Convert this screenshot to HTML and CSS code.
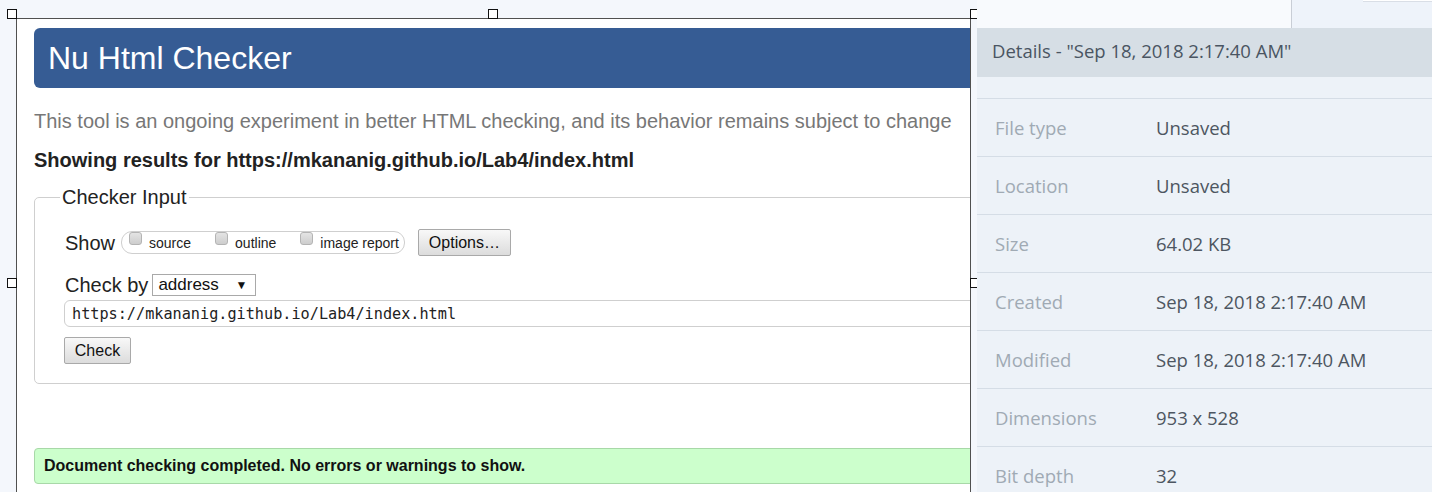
FILE: index.html
```html
<!DOCTYPE html>
<html lang="en">
<head>
<meta charset="utf-8">
<title>Nu Html Checker - Details</title>
<link rel="stylesheet" href="styles.css">
</head>
<body>
<div class="canvas">
  <div class="image">
    <div class="page">
      <h1 class="nu-header">Nu Html Checker</h1>
      <p class="intro">This tool is an ongoing experiment in better HTML checking, and its behavior remains subject to change</p>
      <p class="showing">Showing results for https://mkananig.github.io/Lab4/index.html</p>
      <fieldset class="checker">
        <legend>Checker Input</legend>
        <div class="row show-row">
          <span class="lbl">Show</span>
          <span class="pill">
            <span class="opt"><span class="cb"></span><span class="opt-text">source</span></span>
            <span class="opt"><span class="cb"></span><span class="opt-text">outline</span></span>
            <span class="opt"><span class="cb"></span><span class="opt-text">image report</span></span>
          </span>
          <span class="btn btn-options">Options…</span>
        </div>
        <div class="row by-row">
          <span class="lbl">Check by</span>
          <span class="select"><span class="sel-text">address</span><span class="sel-arrow">▼</span></span>
        </div>
        <div class="url-input">https://mkananig.github.io/Lab4/index.html</div>
        <span class="btn btn-check">Check</span>
      </fieldset>
      <div class="success">Document checking completed. No errors or warnings to show.</div>
    </div>
  </div>
  <span class="handle h-tl"></span>
  <span class="handle h-tm"></span>
  <span class="handle h-tr"></span>
  <span class="handle h-ml"></span>
  <span class="handle h-mr"></span>
</div>
<aside class="panel">
  <div class="panel-top">
    <div class="top-left"></div>
    <div class="top-right"><span class="top-tab"></span></div>
  </div>
  <div class="panel-body">
    <div class="details-head">Details - "Sep 18, 2018 2:17:40 AM"</div>
    <div class="spacer"></div>
    <div class="drow"><span class="dkey">File type</span><span class="dval">Unsaved</span></div>
    <div class="drow"><span class="dkey">Location</span><span class="dval">Unsaved</span></div>
    <div class="drow"><span class="dkey">Size</span><span class="dval">64.02 KB</span></div>
    <div class="drow"><span class="dkey">Created</span><span class="dval">Sep 18, 2018 2:17:40 AM</span></div>
    <div class="drow"><span class="dkey">Modified</span><span class="dval">Sep 18, 2018 2:17:40 AM</span></div>
    <div class="drow"><span class="dkey">Dimensions</span><span class="dval">953 x 528</span></div>
    <div class="drow"><span class="dkey">Bit depth</span><span class="dval">32</span></div>
  </div>
</aside>
</body>
</html>
```

FILE: styles.css
```css
* { box-sizing: border-box; }
html, body { margin: 0; padding: 0; }
body {
  width: 1432px;
  height: 492px;
  overflow: hidden;
  display: flex;
  background: #f4f7fc;
  font-family: "Liberation Sans", Arial, sans-serif;
}

/* ---------- canvas with the image ---------- */
.canvas {
  position: relative;
  flex: 0 0 977px;
  padding: 18px 0 0 16px;
}
.image {
  width: 955px;
  height: 530px;
  border: 1px solid #505050;
  border-bottom: none;
  background: #fff;
  overflow: hidden;
}
.page {
  width: 1100px;
  padding: 9px 0 0 17px;
}
.nu-header {
  margin: 0;
  height: 60px;
  padding-left: 14px;
  background: #365c94;
  color: #fff;
  font-weight: normal;
  font-size: 32px;
  line-height: 60px;
  border-radius: 6px 0 0 6px;
}
.intro {
  margin: 21px 0 0;
  font-size: 20px;
  line-height: 24px;
  color: #777;
}
.showing {
  margin: 15px 0 0;
  font-size: 20px;
  line-height: 24px;
  font-weight: bold;
  color: #222;
}
.checker {
  margin: 13px 0 0;
  padding: 20px 0 19px 29px;
  border: 1px solid #cfcfcf;
  border-radius: 5px;
  min-width: 0;
}
.checker legend {
  margin-left: -4px;
  padding: 0 2px;
  font-size: 20px;
  line-height: 24px;
  color: #222;
}
.row {
  display: flex;
  align-items: center;
}
.lbl {
  margin-left: 1px;
  font-size: 20px;
  line-height: 24px;
  color: #222;
}
.show-row { height: 27px; }
.pill {
  display: flex;
  align-items: flex-start;
  height: 23px;
  margin-left: 6px;
  padding: 0 5px 0 7px;
  border: 1px solid #cfcfcf;
  border-radius: 11px;
  gap: 24px;
}
.opt {
  display: flex;
  align-items: flex-start;
  gap: 7px;
}
.cb {
  width: 13px;
  height: 13px;
  border: 1px solid #b4b4b4;
  border-radius: 3px;
  background: linear-gradient(#e4e4e4, #cdcdcd);
}
.opt-text {
  font-size: 14px;
  line-height: 22px;
  color: #222;
}
.btn {
  display: inline-flex;
  align-items: center;
  justify-content: center;
  height: 27px;
  border: 1px solid #a9a9a9;
  border-radius: 2px;
  background: linear-gradient(#f8f8f8, #dcdcdc);
  font-size: 16px;
  color: #111;
}
.btn-options {
  width: 93px;
  margin-left: 13px;
}
.by-row {
  margin-top: 17px;
  height: 24px;
}
.select {
  display: flex;
  align-items: center;
  justify-content: space-between;
  width: 104px;
  height: 22px;
  margin-left: 4px;
  padding: 0 8px 0 5px;
  border: 1px solid #a9a9a9;
  background: #fff;
}
.sel-text {
  font-size: 17px;
  line-height: 20px;
  color: #111;
}
.sel-arrow {
  font-size: 12px;
  color: #111;
}
.url-input {
  margin-top: 3px;
  height: 27px;
  width: 1020px;
  padding-left: 7px;
  border: 1px solid #cfcfcf;
  border-radius: 6px 0 0 6px;
  font-family: "DejaVu Sans Mono", "Liberation Mono", monospace;
  font-size: 15.2px;
  line-height: 27px;
  color: #222;
}
.btn-check {
  width: 67px;
  margin-top: 10px;
}
.success {
  margin-top: 64px;
  height: 36px;
  padding-left: 9px;
  background: #ccffcc;
  border: 1px solid #a8d8a8;
  border-radius: 4px 0 0 4px;
  font-size: 16px;
  font-weight: bold;
  line-height: 34px;
  color: #111;
}

/* selection handles over the image frame */
.handle {
  position: absolute;
  width: 10px;
  height: 10px;
  border: 1px solid #111;
  background: #fff;
}
.h-tl { left: 7px; top: 9px; }
.h-tm { left: 488px; top: 9px; }
.h-tr { left: 970px; top: 9px; }
.h-ml { left: 7px; top: 278px; }
.h-mr { left: 970px; top: 278px; }

/* ---------- details panel ---------- */
.panel {
  flex: 1;
  display: flex;
  flex-direction: column;
  font-family: "Open Sans", "Noto Sans", sans-serif;
  position: relative;
  z-index: 1;
}
.panel-top {
  flex: 0 0 28px;
  display: flex;
}
.top-left {
  width: 315px;
  background: #f8fafd;
  border-right: 1px solid #c9ced6;
}
.top-right {
  flex: 1;
  background: #eef3fa;
  display: flex;
  justify-content: flex-end;
}
.top-tab {
  width: 69px;
  height: 2px;
  background: #fff;
  border-bottom: 1px solid #d9dee6;
}
.panel-body {
  flex: 1 0 auto;
  background: #edf2f8;
}
.details-head {
  height: 49px;
  padding-left: 15px;
  background: #d6dee5;
  color: #4a5562;
  font-size: 18.5px;
  line-height: 46px;
}
.spacer { height: 21px; }
.drow {
  display: flex;
  align-items: center;
  height: 58px;
  border-top: 1px solid #d5dde6;
  font-size: 18.5px;
}
.dkey {
  width: 179px;
  padding-left: 18px;
  color: #a0aab4;
}
.dval {
  color: #4d5661;
}
```
